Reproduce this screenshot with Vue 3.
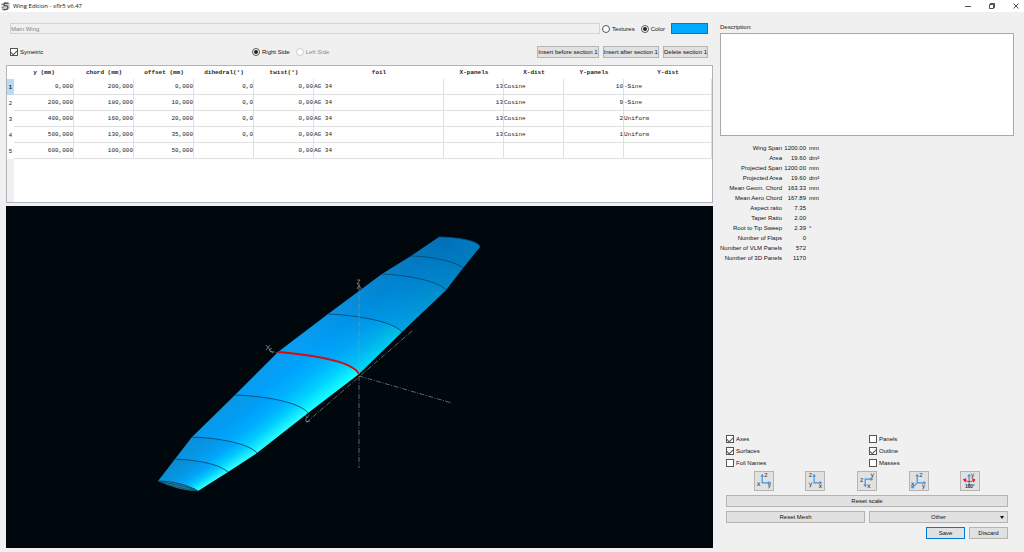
<script setup>
import { ref } from 'vue'

const name = ref('Main Wing')
const description = ref('')
const paint = ref('color')
const side = ref('right')
const symetric = ref(true)

const columns = [
  { title: 'y (mm)', cls: 'num' },
  { title: 'chord (mm)', cls: 'num' },
  { title: 'offset (mm)', cls: 'num' },
  { title: 'dihedral(°)', cls: 'num' },
  { title: 'twist(°)', cls: 'num' },
  { title: 'foil', cls: 'foil' },
  { title: 'X-panels', cls: 'num' },
  { title: 'X-dist', cls: 'dist' },
  { title: 'Y-panels', cls: 'num' },
  { title: 'Y-dist', cls: 'last' }
]

const rows = [
  ['0,000', '200,000', '0,000', '0,0', '0,00', 'AG 34', '13', 'Cosine', '10', '-Sine'],
  ['200,000', '180,000', '10,000', '0,0', '0,00', 'AG 34', '13', 'Cosine', '9', '-Sine'],
  ['400,000', '160,000', '20,000', '0,0', '0,00', 'AG 34', '13', 'Cosine', '2', 'Uniform'],
  ['500,000', '130,000', '35,000', '0,0', '0,00', 'AG 34', '13', 'Cosine', '1', 'Uniform'],
  ['600,000', '100,000', '50,000', '', '0,00', 'AG 34', '', '', '', '']
]

const stats = [
  ['Wing Span', '1200.00', 'mm'],
  ['Area', '19.60', 'dm²'],
  ['Projected Span', '1200.00', 'mm'],
  ['Projected Area', '19.60', 'dm²'],
  ['Mean Geom. Chord', '163.33', 'mm'],
  ['Mean Aero Chord', '167.89', 'mm'],
  ['Aspect ratio', '7.35', ''],
  ['Taper Ratio', '2.00', ''],
  ['Root to Tip Sweep', '2.39', '°'],
  ['Number of Flaps', '0', ''],
  ['Number of VLM Panels', '572', ''],
  ['Number of 3D Panels', '1170', '']
]

const display = ref([
  { label: 'Axes', on: true },
  { label: 'Panels', on: false },
  { label: 'Surfaces', on: true },
  { label: 'Outline', on: true },
  { label: 'Foil Names', on: false },
  { label: 'Masses', on: false }
])

const views = [
  {
    label: 'X view',
    lines: 'M8 4V12H16',
    heads: 'M8 2L6 5H10ZM18 12L15 10V14Z',
    letters: [['z', 12, 6], ['x', 4, 15], ['y', 16, 17]]
  },
  {
    label: 'Y view',
    lines: 'M9 4V12H16',
    heads: 'M9 2L7 5H11ZM18 12L15 10V14Z',
    letters: [['z', 5, 6], ['y', 5, 15], ['x', 16, 18]]
  },
  {
    label: 'Z view',
    lines: 'M15 8H8V15',
    heads: 'M17 8L14 6V10ZM8 17L6 14H10Z',
    letters: [['y', 16, 5], ['z', 4, 11], ['x', 12, 18]]
  },
  {
    label: 'Iso view',
    lines: 'M8 4V12H16M8 12L3 17',
    heads: 'M8 2L6 5H10ZM18 12L15 10V14ZM1 18L2 15L5 18Z',
    letters: [['z', 12, 6], ['x', 3, 15], ['y', 15, 18]]
  }
]

// Each station: trailing edge point, leading edge point and the rib curve handles.
const stations = [
  { te: [158, 481], le: [198, 491], c: [[172, 481], [189, 485]] },
  { te: [175, 459], le: [228, 472], c: [[195, 460], [218, 463]] },
  { te: [192, 437], le: [257, 453], c: [[218, 438], [248, 443]] },
  { te: [235, 395], le: [308, 413], c: [[264, 396], [300, 402]] },
  { te: [278, 352], le: [359, 374], c: [[313, 355], [352, 361]] },
  { te: [328, 314], le: [402, 332], c: [[352, 315], [391, 320]] },
  { te: [382, 274], le: [446, 290], c: [[404, 275], [437, 280]] },
  { te: [411, 256], le: [463, 268], c: [[428, 256], [455, 261]] },
  { te: [439, 237], le: [480, 247], c: [[453, 237], [479, 240]] }
]

const shades = [
  ['#0a8cd4', '#0496e4', '#04a2f6', '#00c8ff', '#30ffff'],
  ['#0a90da', '#0498ea', '#00a6fc', '#00ccff', '#30ffff'],
  ['#0a98e6', '#009ef6', '#00acff', '#00ccff', '#28ffff'],
  ['#0a9cee', '#00a2fc', '#00b4ff', '#00d2ff', '#18ffff'],
  ['#0a9ef0', '#00a0fa', '#00aaff', '#00bcff', '#00e0ff'],
  ['#0a9ef0', '#00a0f8', '#00a8ff', '#00b0ff', '#00bcff'],
  ['#0a9ef0', '#00a0f8', '#00a8ff', '#00aeff', '#00b2ff'],
  ['#0a9ef0', '#00a0f8', '#00a8ff', '#00acff', '#00aeff']
]
const offsets = [0, 0.3, 0.55, 0.76, 1]

const rib = (s) => `M${s.te} C${s.c[0]} ${s.c[1]} ${s.le}`

const strips = stations.slice(0, -1).map((a, i) => {
  const b = stations[i + 1]
  const dx = b.le[0] - a.le[0]
  const dy = b.le[1] - a.le[1]
  const len = Math.hypot(dx, dy)
  const n = [dy / len, -dx / len]
  const m = [(a.te[0] + b.te[0]) / 2, (a.te[1] + b.te[1]) / 2]
  const d = (m[0] - a.le[0]) * n[0] + (m[1] - a.le[1]) * n[1]
  return {
    path: `M${a.te} C${a.c[0]} ${a.c[1]} ${a.le} L${b.le} C${b.c[1]} ${b.c[0]} ${b.te} Z`,
    from: m,
    to: [m[0] - n[0] * d, m[1] - n[1] * d],
    shade: shades[i]
  }
})
</script>

<template>
  <div class="window">
    <header class="titlebar">
      <svg class="logo" viewBox="0 0 24 24" aria-hidden="true">
        <path d="M5 1H20L23 4V17L17 22H8L2 19V12L7 9Z" fill="#c9c9cf" />
        <path d="M8 3H20M9 3L8 10H14C20 10 20 19 14 20H8" fill="none" stroke="#44444c" stroke-width="3" />
        <path d="M1 7L7 5M1 14H7M3 19L11 22" stroke="#77777f" stroke-width="3" />
      </svg>
      <h1>Wing Edition - xflr5 v6.47</h1>
      <div class="winbuttons">
        <button aria-label="Minimize"><svg viewBox="0 0 8 8"><path d="M1 4.5H7" /></svg></button>
        <button aria-label="Restore"><svg viewBox="0 0 8 8"><path d="M1.5 2.5H5.5V6.5H1.5ZM2.5 2.5V1.5H6.5V5.5H5.5" /></svg></button>
        <button aria-label="Close"><svg viewBox="0 0 8 8"><path d="M1.5 1.5L6.5 6.5M6.5 1.5L1.5 6.5" /></svg></button>
      </div>
    </header>

    <main>
      <section class="left">
        <div class="row first">
          <input v-model="name" class="name" type="text" aria-label="Wing name" disabled />
          <label class="opt"><input v-model="paint" type="radio" name="paint" value="textures" />Textures</label>
          <label class="opt"><input v-model="paint" type="radio" name="paint" value="color" />Color</label>
          <button class="swatch" aria-label="Wing color"></button>
        </div>
        <div class="row second">
          <label class="opt sym"><input v-model="symetric" type="checkbox" />Symetric</label>
          <label class="opt"><input v-model="side" type="radio" name="side" value="right" />Right Side</label>
          <label class="opt off"><input v-model="side" type="radio" name="side" value="left" disabled />Left Side</label>
          <div class="actions">
            <button class="btn">Insert before section 1</button>
            <button class="btn">Insert after section 1</button>
            <button class="btn">Delete section 1</button>
          </div>
        </div>

        <div class="sheet">
          <table>
            <colgroup>
              <col class="c-head" />
              <col v-for="c in columns" :key="c.title" :class="'c-' + c.cls" />
            </colgroup>
            <thead>
              <tr>
                <th></th>
                <th v-for="c in columns" :key="c.title" scope="col">{{ c.title }}</th>
              </tr>
            </thead>
            <tbody>
              <tr v-for="(r, i) in rows" :key="i">
                <th scope="row" :class="{ current: i === 0 }">{{ i + 1 }}</th>
                <td v-for="(v, j) in r" :key="j" :class="columns[j].cls">{{ v }}</td>
              </tr>
            </tbody>
          </table>
          <div class="gutter"></div>
        </div>

        <div class="view">
          <svg viewBox="6 206 707 342" role="img" aria-label="3D view of the wing">
            <defs>
              <linearGradient
                v-for="(s, i) in strips" :id="'strip' + i" :key="i" gradientUnits="userSpaceOnUse"
                :x1="s.from[0]" :y1="s.from[1]" :x2="s.to[0]" :y2="s.to[1]"
              >
                <stop v-for="(c, k) in s.shade" :key="k" :offset="offsets[k]" :stop-color="c" />
              </linearGradient>
              <linearGradient id="fade" gradientUnits="userSpaceOnUse" x1="330" y1="365" x2="430" y2="235">
                <stop offset="0" stop-color="#002048" stop-opacity="0" />
                <stop offset="1" stop-color="#002048" stop-opacity="0.36" />
              </linearGradient>
            </defs>
            <path v-for="(s, i) in strips" :key="'p' + i" :d="s.path" :fill="`url(#strip${i})`" />
            <path v-for="(s, i) in strips.slice(4)" :key="'f' + i" :d="s.path" fill="url(#fade)" />
            <path d="M158 481C172 481 189 485 198 491C184 491 168 486 158 481Z" fill="#2a7f9e" />
            <path d="M158 481C172 484 186 486 198 491M158 481C170 486 184 489 198 491" class="rib" />
            <path v-for="(s, i) in stations" :key="'r' + i" :d="rib(s)" class="rib" />
            <path :d="rib(stations[4])" class="root" />
            <path d="M359 286V374" class="axis faint" />
            <path d="M359 376V468M359 376L452 403M270 351L278 353M412 331L307 422" class="axis" />
            <path d="M357 289L359 285L361 289M272 348L269 350L273 353M306 418V422L310 421" class="tip" />
            <path d="M357 280H360L357 284H360" class="tip" />
            <path d="M266 345L270 350M270 345L266 350" class="tip" />
            <path d="M305 415L307 418L309 415" class="tip" />
          </svg>
        </div>
      </section>

      <aside class="right">
        <label class="desc" for="description">Description:</label>
        <textarea id="description" v-model="description"></textarea>

        <dl class="stats">
          <template v-for="s in stats" :key="s[0]">
            <dt>{{ s[0] }}</dt>
            <dd class="val">{{ s[1] }}</dd>
            <dd>{{ s[2] }}</dd>
          </template>
        </dl>

        <div class="bottom">
          <div class="checks">
            <label v-for="d in display" :key="d.label" class="opt"><input v-model="d.on" type="checkbox" />{{ d.label }}</label>
          </div>
          <div class="views">
            <button v-for="v in views" :key="v.label" class="btn icon" :aria-label="v.label">
              <svg viewBox="0 0 20 20">
                <path :d="v.lines" fill="none" stroke="#3b93e6" stroke-width="1.3" />
                <path :d="v.heads" fill="#3b93e6" />
                <text v-for="l in v.letters" :key="l[0]" :x="l[1]" :y="l[2]" class="letter">{{ l[0] }}</text>
              </svg>
            </button>
            <button class="btn icon" aria-label="Flip view">
              <svg viewBox="0 0 20 20">
                <path d="M9 4V14" stroke="#3b93e6" stroke-width="1.4" />
                <path d="M9 2L7 5H11Z" fill="#3b93e6" />
                <path d="M4 9C7 11 12 11 15 9" fill="none" stroke="#f01820" stroke-width="1.2" />
                <path d="M2 8L6 7L5 12ZM16 8L12 7L14 12Z" fill="#f01820" />
                <text x="13" y="6" class="letter">y</text>
                <text x="10" y="18" class="deg">180°</text>
              </svg>
            </button>
          </div>
          <button class="btn">Reset scale</button>
          <div class="pair">
            <button class="btn">Reset Mesh</button>
            <button class="btn other">Other<span class="arrow"></span></button>
          </div>
          <div class="final">
            <button class="btn save">Save</button>
            <button class="btn">Discard</button>
          </div>
        </div>
      </aside>
    </main>
  </div>
</template>

<style>
body {
  background: #f0f0f0;
}
</style>

<style scoped>
.window,
.window * {
  box-sizing: border-box;
}
.window {
  display: flex;
  flex-direction: column;
  min-height: 100vh;
  background: #f0f0f0;
  color: #111;
  font: 6px/8px "Liberation Sans", Arial, sans-serif;
}
button,
input,
textarea {
  font: inherit;
  color: inherit;
  margin: 0;
  padding: 0;
}
.titlebar {
  display: flex;
  align-items: center;
  height: 12px;
  padding: 0 4px 0 1px;
  gap: 3px;
  background: #fff;
}
.logo {
  width: 9px;
  height: 9px;
}
.titlebar h1 {
  margin: 0;
  font: 6px/12px "Open Sans", "Noto Sans", sans-serif;
}
.winbuttons {
  display: flex;
  gap: 16px;
  margin-left: auto;
}
.winbuttons button {
  display: flex;
  width: 8px;
  height: 8px;
  border: 0;
  background: none;
}
.winbuttons svg {
  width: 8px;
  height: 8px;
  fill: none;
  stroke: #222;
  stroke-width: 0.8;
}
main {
  display: flex;
  flex: 1;
  gap: 7px;
  padding: 11px 10px 4px 6px;
}
.left {
  display: flex;
  flex-direction: column;
  flex: 707;
  min-width: 0;
}
.row {
  display: flex;
  align-items: center;
  padding: 0 5px 0 4px;
}
.first {
  height: 11px;
  gap: 6px;
}
.name {
  flex: 1;
  height: 11px;
  margin-right: -4px;
  border: 1px solid #d4d4d4;
  background: #f0f0f0;
  color: #858585;
}
.opt {
  display: flex;
  align-items: center;
  gap: 2px;
  white-space: nowrap;
}
.opt input {
  appearance: none;
  display: grid;
  place-items: center;
  flex: none;
  width: 8px;
  height: 8px;
  border: 1px solid #555;
  background: #fff;
}
.opt input[type='radio'] {
  border-radius: 50%;
}
.opt input[type='radio']:checked::before {
  content: '';
  width: 4px;
  height: 4px;
  border-radius: 50%;
  background: #222;
}
.opt input[type='checkbox']:checked::before {
  content: '';
  width: 5px;
  height: 3px;
  margin-bottom: 1px;
  border: solid #555;
  border-width: 0 0 1px 1px;
  transform: rotate(-45deg);
}
.off {
  color: #8c8c8c;
}
.opt input:disabled {
  border-color: #ccc;
}
.swatch {
  width: 37px;
  height: 11px;
  border: 1px solid #0a78b8;
  background: #00aaff;
}
.second {
  height: 12px;
  margin-top: 12px;
  gap: 6px;
}
.sym {
  width: 236px;
}
.actions {
  display: flex;
  gap: 4px;
  margin-left: auto;
}
.btn {
  height: 12px;
  padding: 0;
  border: 1px solid #b4b4b4;
  background: #e1e1e1;
  line-height: 10px;
  text-align: center;
  white-space: nowrap;
}
.sheet {
  display: flex;
  flex-direction: column;
  height: 138px;
  margin-top: 7px;
  border: 1px solid #b0b3b8;
  background: #fff;
  font: 6px/8px "Liberation Mono", monospace;
  color: #222;
}
table {
  width: 100%;
  table-layout: fixed;
  border-collapse: separate;
  border-spacing: 0;
}
.c-head {
  width: 7px;
}
.c-num,
.c-dist {
  width: 60px;
}
.c-foil {
  width: 130px;
}
th,
td {
  padding: 0;
  white-space: nowrap;
}
thead th {
  height: 13px;
  font-weight: bold;
}
tbody th {
  height: 16px;
  font: 6px/8px "Liberation Sans", sans-serif;
}
tbody th.current {
  background: #b9dcf6;
  font-weight: bold;
}
td {
  border-right: 1px solid #e0e0e0;
  border-bottom: 1px solid #e0e0e0;
}
td.num {
  text-align: right;
}
.gutter {
  flex: 1;
  width: 7px;
  background: #f0f0f0;
}
.view {
  display: flex;
  flex: 1;
  margin-top: 3px;
  background: #00080d;
}
.view svg {
  display: block;
  width: 100%;
}
.rib {
  fill: none;
  stroke: #084a70;
  stroke-width: 0.8;
}
.root {
  fill: none;
  stroke: #d01010;
  stroke-width: 1.8;
}
.axis {
  fill: none;
  stroke: #a0a4a6;
  stroke-width: 0.6;
  stroke-dasharray: 5 1.5 1 1.5;
}
.faint {
  stroke: #8a9aa6;
}
.tip {
  fill: none;
  stroke: #b0b4b6;
  stroke-width: 0.6;
}
.right {
  display: flex;
  flex-direction: column;
  flex: 294;
  min-width: 0;
}
.desc {
  height: 10px;
}
textarea {
  display: block;
  width: 100%;
  height: 103px;
  border: 1px solid #a8a8a8;
  background: #fff;
  resize: none;
}
.stats {
  display: grid;
  grid-template-columns: 62px 21px 1fr;
  grid-auto-rows: 10px;
  column-gap: 3px;
  margin: 7px 0 0;
  line-height: 10px;
  white-space: nowrap;
}
.stats dt,
.stats .val {
  justify-self: end;
}
.stats dd {
  margin: 0;
}
.bottom {
  display: flex;
  flex-direction: column;
  gap: 4px;
  margin-top: auto;
  padding: 0 6px 9px;
}
.checks {
  display: grid;
  grid-template-columns: 1fr 1fr;
  grid-auto-rows: 8px;
  gap: 4px;
}
.views {
  display: flex;
  justify-content: space-around;
  padding: 0 12px;
}
.icon {
  width: 20px;
  height: 20px;
}
.icon svg {
  display: block;
  width: 18px;
  height: 18px;
}
.letter {
  fill: #333;
  font: 7px "DejaVu Sans", sans-serif;
  text-anchor: middle;
}
.deg {
  fill: #222;
  font: bold 5px "Liberation Sans", sans-serif;
  text-anchor: middle;
}
.pair {
  display: grid;
  grid-template-columns: 1fr 1fr;
  gap: 4px;
}
.other {
  position: relative;
}
.arrow {
  position: absolute;
  right: 3px;
  top: 4px;
  border: solid transparent;
  border-width: 3px 2px 0;
  border-top-color: #111;
}
.final {
  display: flex;
  justify-content: flex-end;
  gap: 4px;
}
.final .btn {
  width: 39px;
}
.final .save {
  border-color: #0078d7;
}
</style>
